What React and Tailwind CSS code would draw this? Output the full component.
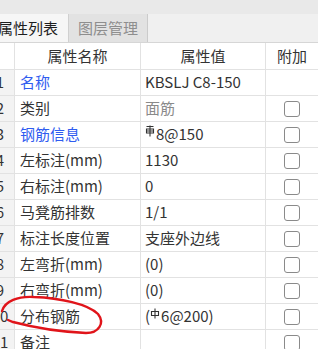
import React from "react";

const FONT = { fontFamily: '"Noto Sans CJK SC", "Noto Sans", sans-serif' };

function Sym400() {
  return (
    <svg width="10" height="12" viewBox="0 0 10 12" className="inline-block align-top mt-[2px] mr-[1px]">
      <path d="M1.5 1.5 H8.5 M1.5 4 H8.5 V8 H1.5 Z M1.5 6 H8.5 M5 0.5 V11.5" fill="none" stroke="#333" strokeWidth="1.1" />
    </svg>
  );
}

function Sym300() {
  return (
    <svg width="10" height="12" viewBox="0 0 10 12" className="inline-block align-top mt-[3px] mr-[1px]">
      <path d="M1.5 3.5 H8.5 V7.5 H1.5 Z M5 0.5 V10.5" fill="none" stroke="#333" strokeWidth="1.1" />
    </svg>
  );
}

const rows = [
  { n: 1, name: "名称", blue: true, value: "KBSLJ C8-150", box: false },
  { n: 2, name: "类别", value: "面筋", gray: true },
  { n: 3, name: "钢筋信息", blue: true, value: <><Sym400 />8@150</> },
  { n: 4, name: "左标注(mm)", value: "1130" },
  { n: 5, name: "右标注(mm)", value: "0" },
  { n: 6, name: "马凳筋排数", value: "1/1" },
  { n: 7, name: "标注长度位置", value: "支座外边线" },
  { n: 8, name: "左弯折(mm)", value: "(0)" },
  { n: 9, name: "右弯折(mm)", value: "(0)" },
  { n: 10, name: "分布钢筋", value: <>(<Sym300 />6@200)</>, circled: true },
  { n: 11, name: "备注", value: "" },
];

function Row({ r }) {
  return (
    <div className="flex h-[26px] shrink-0 border-b border-[#e2e2e2] bg-white">
      <div className="w-[15px] shrink-0 overflow-hidden bg-[#f3f3f3] border-r border-[#e2e2e2] flex items-center">
        <div className="w-[30px] shrink-0 -ml-[15px] text-center text-[15px] text-[#333]">{r.n}</div>
      </div>
      <div className={`w-[126px] shrink-0 border-r border-[#e2e2e2] pl-[5px] flex items-center text-[15px] whitespace-nowrap ${r.blue ? "text-[#2f5cf0]" : "text-[#333]"}`}>
        {r.name}
      </div>
      <div className={`w-[125px] shrink-0 border-r border-[#e2e2e2] pl-[4px] flex items-center text-[15px] whitespace-nowrap ${r.gray ? "text-[#8a8a8a]" : "text-[#333]"}`}>
        <span>{r.value}</span>
      </div>
      <div className="flex-1 flex items-center justify-center">
        {r.box === false ? null : (
          <div className="w-[16px] h-[16px] rounded-[3px] border border-[#8a8a8a] bg-white" />
        )}
      </div>
    </div>
  );
}

export default function App() {
  return (
    <div className="relative w-[318px] h-[349px] overflow-hidden bg-white flex flex-col" style={FONT}>
      <div className="h-[14px] shrink-0 bg-[#e9e9e9]" />
      <div className="h-[29px] shrink-0 flex bg-[#f0f0f0] border-b border-[#d6d6d6]">
        <div className="w-[69px] shrink-0 bg-[#f6f6f6] border-r border-[#d0d0d0] flex items-center justify-end pr-[10px] text-[15px] text-[#1e1e1e] whitespace-nowrap overflow-hidden">
          属性列表
        </div>
        <div className="w-[79px] shrink-0 bg-[#e2e2e2] border-r border-[#cbcbcb] flex items-center justify-center text-[15px] text-[#8e8e8e] whitespace-nowrap">
          图层管理
        </div>
      </div>
      <div className="h-[27px] shrink-0 flex bg-white border-b border-[#e2e2e2]">
        <div className="w-[15px] shrink-0 border-r border-[#e2e2e2]" />
        <div className="w-[126px] shrink-0 border-r border-[#e2e2e2] flex items-center justify-center text-[15px] text-[#333]">属性名称</div>
        <div className="w-[125px] shrink-0 border-r border-[#e2e2e2] flex items-center justify-center text-[15px] text-[#333]">属性值</div>
        <div className="flex-1 flex items-center justify-center text-[15px] text-[#333]">附加</div>
      </div>
      {rows.map((r) => (
        <Row key={r.n} r={r} />
      ))}
      <svg className="absolute left-0 top-0 pointer-events-none" width="318" height="349" viewBox="0 0 318 349">
        <path
          d="M2 311 C5 301 18 296 34 297 C60 298 88 304 98 314 C105 323 99 333 86 333 C62 332 32 327 13 322 L8 320"
          fill="none"
          stroke="#e0141a"
          strokeWidth="2.4"
          strokeLinecap="round"
        />
      </svg>
    </div>
  );
}
